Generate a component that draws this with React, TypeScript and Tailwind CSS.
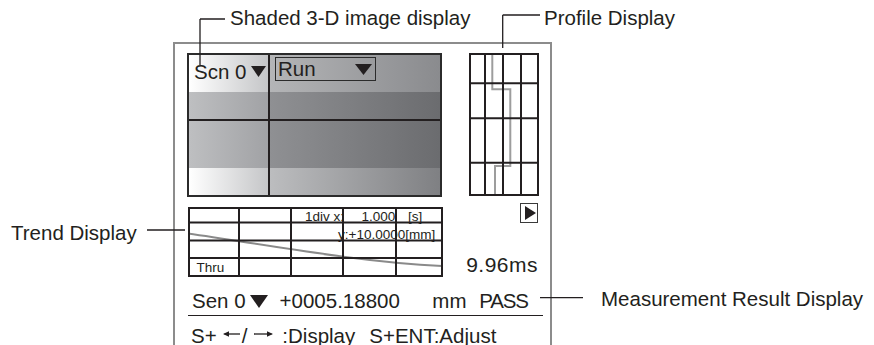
import React from "react";

const INK = "#231f20";

function Down({ w, h }: { w: number; h: number }) {
  return (
    <svg width={w} height={h} viewBox={`0 0 ${w} ${h}`} className="block shrink-0">
      <polygon points={`0,0 ${w},0 ${w / 2},${h}`} fill={INK} />
    </svg>
  );
}

function Arrow({ dir, w }: { dir: "left" | "right"; w: number }) {
  const d =
    dir === "left"
      ? `M1.5 4 H${w}`
      : `M0 4 H${w - 1.5}`;
  const head =
    dir === "left" ? `0,4 6,1.2 6,6.8` : `${w},4 ${w - 6},1.2 ${w - 6},6.8`;
  return (
    <svg width={w} height={8} viewBox={`0 0 ${w} 8`} className="block shrink-0">
      <path d={d} stroke={INK} strokeWidth={1.3} fill="none" />
      <polygon points={head} fill={INK} />
    </svg>
  );
}

function Profile() {
  const xs = [1, 16, 34, 52, 69];
  const ys = [1, 30.3, 65.3, 109.7, 142];
  return (
    <svg width={70} height={143} viewBox="0 0 70 143" className="block shrink-0">
      <rect x={0} y={0} width={70} height={143} fill="#fff" />
      <path d="M23.3 0 V36.3 H41.3 V113 H26 V143" fill="none" stroke="#9d9d9d" strokeWidth={2} />
      {xs.map((x) => (
        <line key={"v" + x} x1={x} y1={0} x2={x} y2={143} stroke={INK} strokeWidth={2} />
      ))}
      {ys.map((y) => (
        <line key={"h" + y} x1={0} y1={y} x2={70} y2={y} stroke={INK} strokeWidth={2} />
      ))}
    </svg>
  );
}

function TrendGrid() {
  const xs = [1, 51, 103, 155, 208, 254];
  const ys = [1, 15.5, 33.5, 51, 69];
  return (
    <svg width={255} height={70} viewBox="0 0 255 70" className="block">
      <path d="M0 26.5 C 80 38, 170 55, 254 59" fill="none" stroke="#8a8a8a" strokeWidth={2} />
      {xs.map((x) => (
        <line key={"v" + x} x1={x} y1={0} x2={x} y2={70} stroke={INK} strokeWidth={2} />
      ))}
      {ys.map((y) => (
        <line key={"h" + y} x1={0} y1={y} x2={255} y2={y} stroke={INK} strokeWidth={2} />
      ))}
    </svg>
  );
}

export default function App() {
  return (
    <div
      className="relative w-[874px] h-[345px] overflow-hidden bg-white text-[#231f20]"
      style={{ fontFamily: '"Liberation Sans", Arial, sans-serif' }}
    >
      {/* Device panel */}
      <div className="ml-[173px] mt-[42px] w-[379px] h-[303px] border-2 border-b-0 border-[#8c8c8c] pl-[12px] pt-[9px]">
        {/* Row 1 */}
        <div className="flex items-start">
          <div className="w-[255px] h-[144px] border-2 border-[#2b2b2b] flex flex-col">
            {/* top half */}
            <div className="h-[37px] flex">
              <div className="w-[79px] bg-[linear-gradient(to_right,#ffffff,#c5c6c8)] flex items-center pl-[5px] pb-[4px] text-[20.5px] leading-[24px]">
                <span>Scn 0</span>
                <span className="ml-[5px]">
                  <Down w={15} h={11} />
                </span>
              </div>
              <div className="w-[2px] bg-[#231f20]" />
              <div className="flex-1 bg-[linear-gradient(to_right,#b4b5b7,#8a8b8e)] pl-[5px] pt-[2px]">
                <div className="w-[101px] h-[24px] border-[1.5px] border-[#2b2b2b] flex items-center text-[20.5px] leading-[24px]">
                  <span className="pl-[2px]">Run</span>
                  <span className="ml-auto mr-[3px]">
                    <Down w={17} h={11} />
                  </span>
                </div>
              </div>
            </div>
            <div className="h-[27px] flex">
              <div className="w-[79px] bg-[linear-gradient(to_right,#bebfc1,#a1a2a5)]" />
              <div className="w-[2px] bg-[#231f20]" />
              <div className="flex-1 bg-[linear-gradient(to_right,#8f9093,#6b6c6f)]" />
            </div>
            <div className="h-[2px] bg-[#231f20]" />
            {/* bottom half */}
            <div className="h-[47px] flex">
              <div className="w-[79px] bg-[linear-gradient(to_right,#bebfc1,#a1a2a5)]" />
              <div className="w-[2px] bg-[#231f20]" />
              <div className="flex-1 bg-[linear-gradient(to_right,#8f9093,#6b6c6f)]" />
            </div>
            <div className="h-[27px] flex">
              <div className="w-[79px] bg-[linear-gradient(to_right,#ffffff,#c5c6c8)]" />
              <div className="w-[2px] bg-[#231f20]" />
              <div className="flex-1 bg-[linear-gradient(to_right,#bcbdbf,#7f8083)]" />
            </div>
          </div>
          <div className="ml-[27px]">
            <Profile />
          </div>
        </div>

        {/* Row 2 */}
        <div className="flex items-start h-[80px]">
          <div className="relative ml-[1px] mt-[10px] w-[255px] h-[70px]">
            <TrendGrid />
            <span className="absolute left-[117px] top-[3px] text-[13.5px] leading-[14px]">1div x:</span>
            <span className="absolute left-[173.5px] top-[3px] text-[13.5px] leading-[14px]">1.000</span>
            <span className="absolute left-[220px] top-[3px] text-[13.5px] leading-[14px]">[s]</span>
            <span className="absolute left-[150px] top-[20.5px] text-[13.5px] leading-[14px]">y:+10.0000[mm]</span>
            <span className="absolute left-[8.5px] top-[54px] text-[13.5px] leading-[14px]">Thru</span>
          </div>
          <div className="w-[95px] flex flex-col items-end">
            <div className="mt-[6px] w-[18px] h-[20px] border border-[#3a3a3a] flex items-center justify-end pr-[1px]">
              <svg width={11} height={14} viewBox="0 0 11 14" className="block">
                <polygon points="0,0 11,7 0,14" fill={INK} />
              </svg>
            </div>
            <div className="mt-[30px] text-[21px] leading-[24px] tracking-[0.5px]">9.96ms</div>
          </div>
        </div>

        {/* Row 3: result */}
        <div className="mt-[12px] ml-[1px] w-[355px] h-[27px] border-b-[1.5px] border-[#231f20] flex items-start pl-[4px] text-[20.5px] leading-[24px]">
          <span>Sen 0</span>
          <span className="ml-[4px] h-[24px] flex items-center">
            <Down w={18} h={13} />
          </span>
          <span className="ml-[12px]">+0005.18800</span>
          <span className="ml-[32.5px]">mm</span>
          <span className="ml-[12.8px] tracking-[-1.2px]">PASS</span>
        </div>

        {/* Row 4: hint */}
        <div className="mt-[7.5px] ml-[4px] flex items-start text-[20.5px] leading-[24px] whitespace-pre">
          <span>S+</span>
          <span className="ml-[6px] mt-[6px]">
            <Arrow dir="left" w={17} />
          </span>
          <span className="ml-[2px]">/</span>
          <span className="ml-[7px] mt-[6px]">
            <Arrow dir="right" w={19} />
          </span>
          <span className="ml-[9px]">:Display</span>
          <span className="ml-[14px]">S+ENT:Adjust</span>
        </div>
      </div>

      {/* Callout leader lines */}
      <svg width={874} height={345} viewBox="0 0 874 345" className="absolute left-0 top-0 pointer-events-none">
        <path
          d="M200 19 H225 M200 19 V65 M502.7 15 H540 M502.7 15 V48 M147 230 H185 M540 297.7 H583"
          fill="none"
          stroke={INK}
          strokeWidth={1.3}
        />
      </svg>

      {/* Callout labels */}
      <span className="absolute left-[230px] top-[6px] text-[20.5px] leading-[24px] whitespace-nowrap">Shaded 3-D image display</span>
      <span className="absolute left-[544px] top-[6px] text-[20.5px] leading-[24px] whitespace-nowrap">Profile Display</span>
      <span className="absolute left-[11px] top-[220.5px] text-[20.5px] leading-[24px] whitespace-nowrap">Trend Display</span>
      <span className="absolute left-[601px] top-[287px] text-[20.5px] leading-[24px] whitespace-nowrap">Measurement Result Display</span>
    </div>
  );
}
